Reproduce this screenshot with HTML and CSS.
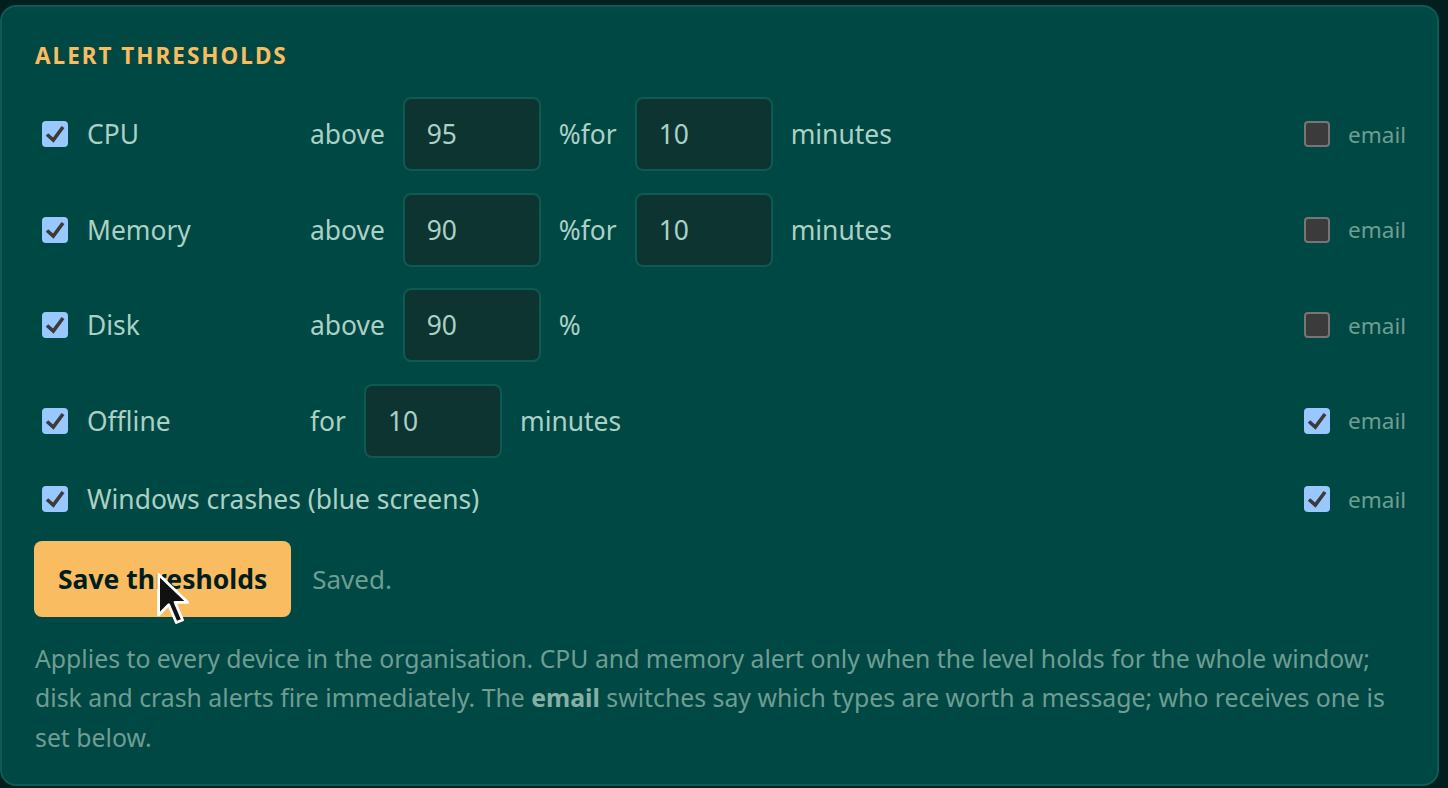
FILE: index.html
```html
<!DOCTYPE html>
<html lang="en">
<head>
  <meta charset="UTF-8" />
  <meta name="viewport" content="width=device-width, initial-scale=1.0"/>
  <title>Alert thresholds</title>
  <link rel="stylesheet" href="styles.css">
</head>
<body>
  <section class="card">
    <h2 class="card-title">Alert thresholds</h2>

    <div class="rules">
      <div class="rule">
        <span class="check on"><svg viewBox="0 0 26 26"><polyline points="5,13.5 11.3,19 21,6"/></svg></span>
        <span class="name">CPU</span>
        <span class="word">above</span>
        <input class="num" type="text" value="95" />
        <span class="word">%for</span>
        <input class="num" type="text" value="10" />
        <span class="word">minutes</span>
        <span class="mail"><span class="check"></span>email</span>
      </div>

      <div class="rule">
        <span class="check on"><svg viewBox="0 0 26 26"><polyline points="5,13.5 11.3,19 21,6"/></svg></span>
        <span class="name">Memory</span>
        <span class="word">above</span>
        <input class="num" type="text" value="90" />
        <span class="word">%for</span>
        <input class="num" type="text" value="10" />
        <span class="word">minutes</span>
        <span class="mail"><span class="check"></span>email</span>
      </div>

      <div class="rule">
        <span class="check on"><svg viewBox="0 0 26 26"><polyline points="5,13.5 11.3,19 21,6"/></svg></span>
        <span class="name">Disk</span>
        <span class="word">above</span>
        <input class="num" type="text" value="90" />
        <span class="word">%</span>
        <span class="mail"><span class="check"></span>email</span>
      </div>

      <div class="rule">
        <span class="check on"><svg viewBox="0 0 26 26"><polyline points="5,13.5 11.3,19 21,6"/></svg></span>
        <span class="name">Offline</span>
        <span class="word">for</span>
        <input class="num" type="text" value="10" />
        <span class="word">minutes</span>
        <span class="mail"><span class="check on"><svg viewBox="0 0 26 26"><polyline points="5,13.5 11.3,19 21,6"/></svg></span>email</span>
      </div>

      <div class="rule short">
        <span class="check on"><svg viewBox="0 0 26 26"><polyline points="5,13.5 11.3,19 21,6"/></svg></span>
        <span class="name wide">Windows crashes (blue screens)</span>
        <span class="mail"><span class="check on"><svg viewBox="0 0 26 26"><polyline points="5,13.5 11.3,19 21,6"/></svg></span>email</span>
      </div>
    </div>

    <div class="actions">
      <button class="button">Save thresholds</button>
      <span class="status">Saved.</span>
      <svg class="cursor" viewBox="0 0 13 21"><path d="M1 1 L1 17 L5 13 L8 20 L10.5 19 L7.5 12 L12.5 12 Z"/></svg>
    </div>

    <p class="note"><span>Applies to every device in the organisation. CPU and memory alert only when the level holds for the whole window;</span>
      <span>disk and crash alerts fire immediately. The</span> <b>email</b> <span>switches say which types are worth a message; who receives one is</span>
      <span>set below.</span></p>
  </section>
</body>
</html>
```
FILE: styles.css
```css
body {
  margin: 0;
  background: #021e1d;
  font-family: 'Noto Sans', 'Open Sans', sans-serif;
  color: #abd1c6;
}

.card {
  margin: 5px 9px 0 0;
  background: #004843;
  border: 2px solid #0c5b54;
  border-radius: 16px;
  padding: 38px 31px 27px 33px;
}

.card-title {
  margin: 0 0 29.5px 0;
  font-size: 22.5px;
  line-height: 1;
  font-weight: 700;
  letter-spacing: 2px;
  text-transform: uppercase;
  color: #f9bc60;
}

.rules {
  display: flex;
  flex-direction: column;
  gap: 21.5px;
}

.rule {
  display: flex;
  align-items: center;
  gap: 18px;
  height: 74px;
  font-size: 26.4px;
}

.rule.short {
  height: 40px;
}

.check {
  flex: none;
  width: 26px;
  height: 26px;
  box-sizing: border-box;
  margin-left: 7px;
  border: 2px solid #767676;
  border-radius: 4px;
  background: #3b3b3b;
}

.check.on {
  border: none;
  background: #99c8ff;
}

.check svg {
  display: block;
  width: 26px;
  height: 26px;
}

.check polyline {
  fill: none;
  stroke: #3b3b3b;
  stroke-width: 3.6;
}

.name {
  width: 205px;
  margin-left: 1px;
}

.name.wide {
  width: auto;
}

.word {
  white-space: nowrap;
}

.num {
  width: 138px;
  height: 74px;
  box-sizing: border-box;
  padding: 0 0 0 22px;
  border: 2px solid #0d5a53;
  border-radius: 8px;
  background: #0e3432;
  color: #abd1c6;
  font: inherit;
  outline: none;
}

.mail {
  margin-left: auto;
  display: flex;
  align-items: center;
  gap: 18px;
  font-size: 22.5px;
  color: #6e9d94;
}

.mail .check {
  margin-left: 0;
}

.actions {
  position: relative;
  display: flex;
  align-items: center;
  gap: 21px;
  margin: 22px 0 0 -1px;
}

.button {
  height: 76px;
  padding: 0 24px;
  border: none;
  border-radius: 8px;
  background: #f9bc60;
  color: #001e1d;
  font-family: inherit;
  font-size: 26.5px;
  font-weight: 700;
  cursor: pointer;
}

.status {
  font-size: 26px;
  color: #6e9d94;
}

.cursor {
  position: absolute;
  left: 122px;
  top: 31px;
  width: 33px;
  height: 53px;
}

.cursor path {
  fill: #111;
  stroke: #fff;
  stroke-width: 1.1;
  stroke-linejoin: round;
}

.note {
  margin: 21.5px 0 0 0;
  font-size: 24.8px;
  line-height: 39.5px;
  color: #6e9d94;
}

.note b {
  color: #86b0a6;
}
```
